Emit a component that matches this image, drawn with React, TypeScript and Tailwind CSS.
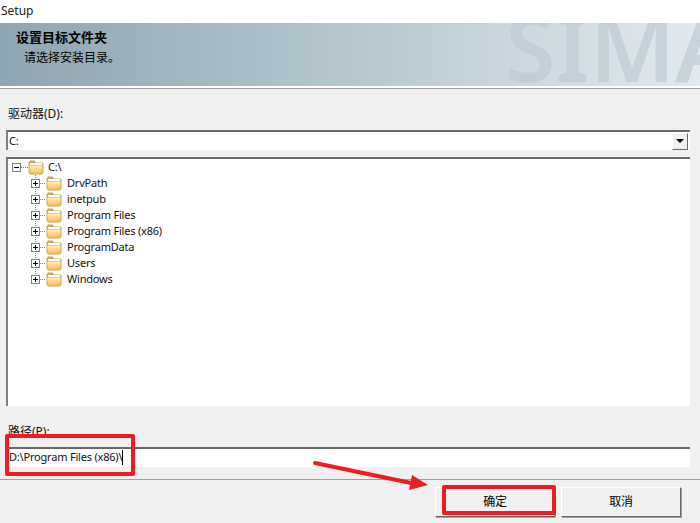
const font = '[font-family:"Noto_Sans","Noto_Sans_CJK_SC",sans-serif]';

const folders = ['DrvPath', 'inetpub', 'Program Files', 'Program Files (x86)', 'ProgramData', 'Users', 'Windows'];

function FolderIcon() {
  return (
    <svg width="16" height="15" viewBox="0 0 16 15" className="shrink-0">
      <defs>
        <linearGradient id="folderBody" x1="0" y1="0" x2="0" y2="1">
          <stop offset="0" stopColor="#fff2b8" />
          <stop offset="1" stopColor="#f5c04a" />
        </linearGradient>
      </defs>
      <path d="M0.5 2.5 L2 0.5 H6.5 L8 2.5 H14 L15.5 4 V12.5 L14 14.5 H2 L0.5 12.5 Z" fill="#c9a961" />
      <path d="M2 3 H14 V5 H2 Z" fill="#fbf8ec" />
      <path d="M1.5 5.5 H14.5 V12 L13.5 13.5 H2.5 L1.5 12 Z" fill="url(#folderBody)" />
    </svg>
  );
}

// plus/minus box with the tree's dotted lines
function Expander({ open, child, last }: { open?: boolean; child?: boolean; last?: boolean }) {
  return (
    <svg width={child ? 15 : 16} height="16" viewBox={child ? '0 0 15 16' : '0 0 16 16'} className="shrink-0">
      {child && <path d={last ? 'M4.5 0 V8' : 'M4.5 0 V16'} stroke="#808080" strokeDasharray="1 1" />}
      <path d="M9 8.5 H16" stroke="#808080" strokeDasharray="1 1" />
      <rect x="0.5" y="4.5" width="8" height="8" fill="#fff" stroke="#808080" />
      <path d="M2 8.5 H7" stroke="#000" />
      {!open && <path d="M4.5 6 V11" stroke="#000" />}
    </svg>
  );
}

function Button({ label }: { label: string }) {
  return (
    <button className="flex h-[30px] w-[120px] items-center justify-center border border-t-white border-l-white border-r-[#696969] border-b-[#696969] bg-[#f0f0f0] text-[12px] text-black shadow-[1px_1px_0_#a0a0a0]">
      {label}
    </button>
  );
}

export default function App() {
  return (
    <div className={`relative flex h-[523px] w-[700px] flex-col overflow-hidden bg-[#f0f0f0] text-[11px] tracking-[-0.2px] text-[#111] ${font}`}>
      {/* Title */}
      <div className="flex h-[21px] items-center bg-white pl-px text-[12px] tracking-normal text-[#222]">Setup</div>
      <div className="h-[2px] bg-white" />

      {/* Banner */}
      <div className="relative h-[63px] overflow-hidden bg-gradient-to-r from-[#8fa5b1] via-[#b6c7cf] to-[#e2eaee] pl-4 pt-[6px] tracking-normal text-black">
        <div className="absolute left-[505px] top-[-22px] text-[92px] leading-none font-semibold text-[#bccbd4]/70">SIMA</div>
        <div className="relative text-[13px] leading-[16px] font-bold">设置目标文件夹</div>
        <div className="relative mt-[5px] pl-2 text-[12px] leading-[16px]">请选择安装目录。</div>
      </div>
      <div className="h-[3px] border-b border-[#a0a0a0] bg-white" />

      {/* Body */}
      <div className="flex flex-1 flex-col px-[6px]">
        <div className="mt-[17px] h-[16px] pl-[2px] text-[12px] leading-[16px] tracking-normal">驱动器(D):</div>
        <div className="mt-[8px] flex h-[20px] w-[684px] items-center justify-between border-t-2 border-l-2 border-t-[#696969] border-l-[#808080] bg-white pl-px pr-[2px]">
          <span>C:</span>
          <div className="flex h-[17px] w-[16px] items-center justify-center border border-t-white border-l-white border-r-[#696969] border-b-[#696969] bg-[#f0f0f0]">
            <div className="h-0 w-0 border-x-[4px] border-t-[4px] border-x-transparent border-t-black" />
          </div>
        </div>

        {/* Tree */}
        <div className="mt-[7px] h-[249px] w-[684px] border-t-2 border-l-2 border-t-[#696969] border-l-[#808080] bg-white pl-[4px]">
          <div className="flex h-[16px] items-center">
            <Expander open />
            <FolderIcon />
            <span className="ml-[4px]">C:\</span>
          </div>
          {folders.map((name, i) => (
            <div key={name} className="flex h-[16px] items-center pl-[19px]">
              <Expander child last={i === folders.length - 1} />
              <FolderIcon />
              <span className="ml-[5px]">{name}</span>
            </div>
          ))}
        </div>

        <div className="mt-[18px] h-[16px] pl-[2px] text-[12px] leading-[16px] tracking-normal">路径(P):</div>
        <div className="mt-[7px] flex h-[20px] w-[684px] items-center border-t-2 border-l-2 border-t-[#696969] border-l-[#808080] bg-white pb-px pl-px">
          <span>D:\Program Files (x86)\</span>
          <span className="h-[15px] w-px bg-black" />
        </div>
      </div>

      {/* Footer */}
      <div className="flex h-[44px] justify-end gap-[6px] border-t border-[#a0a0a0] pr-[19px] pt-[7px]">
        <Button label="确定" />
        <Button label="取消" />
      </div>

      {/* Red annotations */}
      <div className="absolute left-[5px] top-[434px] h-[42px] w-[130px] rounded-[2px] border-[4px] border-[#ed1c24]" />
      <div className="absolute left-[442px] top-[485px] h-[30px] w-[114px] rounded-[2px] border-[4px] border-[#ed1c24]" />
      <svg className="absolute left-[310px] top-[455px]" width="125" height="40" viewBox="0 0 125 40">
        <path d="M5 8 L106 29" stroke="#ed1c24" strokeWidth="4" strokeLinecap="round" />
        <path d="M118 30 L102 20 L99 35 Z" fill="#ed1c24" />
      </svg>
    </div>
  );
}
